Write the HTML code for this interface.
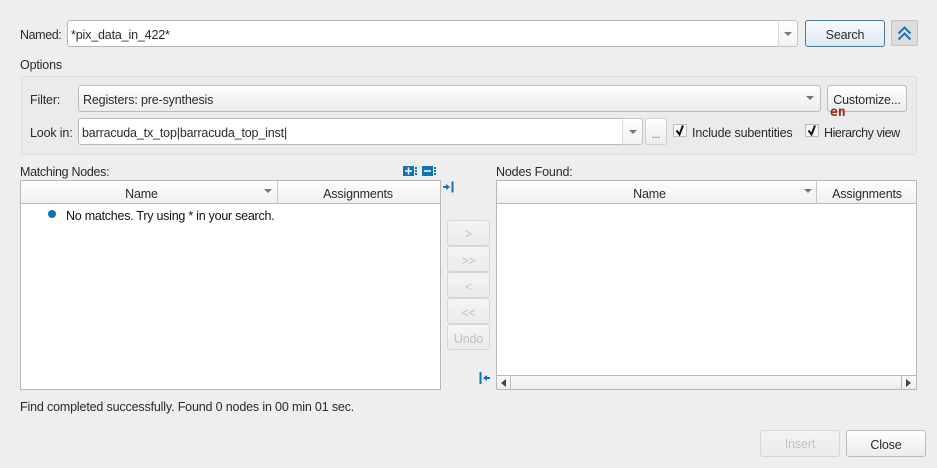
<!DOCTYPE html>
<html><head><meta charset="utf-8"><style>
html,body{margin:0;padding:0;width:937px;height:468px;overflow:hidden;background:#eeeeee}
body{position:relative;font-family:"Liberation Sans",sans-serif;font-size:12.5px;letter-spacing:-.16px;color:#2a2a2a}
.a{position:absolute;box-sizing:border-box}
.t{position:absolute;white-space:nowrap;line-height:16px}
.f{background:#fff;border:1px solid #b8b8b8;border-radius:3px}
.g{background:linear-gradient(#fefefe,#ececec);border:1px solid #bcbcbc;border-radius:3px}
.sep{background:linear-gradient(#fff,#f2f2f2);border:1px solid #c4c4c4;border-left-color:#dcdcdc;border-radius:0 3px 3px 0}
.d{background:linear-gradient(#f4f4f4,#ebebeb);border:1px solid #d6d6d6;border-radius:3px;color:#c2c2c2;text-align:center;line-height:26px}
.l{line-height:28px}
.ar{position:absolute;width:0;height:0;border-left:4px solid transparent;border-right:4px solid transparent;border-top:4px solid #777}
.cb{position:absolute;width:14px;height:13px;box-sizing:border-box;background:#f6f6f6;border:1px solid #bcbcbc;border-radius:1px}
.h{background:linear-gradient(#fefefe,#f0f0f0);border-bottom:1px solid #b8b8b8}
.c{text-align:center}
</style></head><body>

<div class="t" style="left:20px;top:27px;letter-spacing:-.4px">Named:</div>
<div class="a f" style="left:67px;top:20px;width:731px;height:27px"></div>
<div class="a sep" style="left:778px;top:20px;width:20px;height:27px"></div>
<div class="ar" style="left:784px;top:32px"></div>
<div class="t" style="left:71px;top:27px">*pix_data_in_422*</div>

<div class="a" style="left:805px;top:20px;width:80px;height:27px;border:1px solid #4a7893;border-radius:3px;background:linear-gradient(#f8fbfd,#dde9f1)"></div>
<div class="t c" style="left:805px;top:27px;width:80px">Search</div>

<div class="a" style="left:891px;top:20px;width:27px;height:26px;border:1px solid #c4c4c4;border-radius:2px;background:#dcdcdc"></div>
<svg class="a" style="left:891px;top:20px" width="27" height="26" fill="none" stroke="#1b73b4" stroke-width="2"><path d="M7.500 13.500L13.500 7.500L19.500 13.500M7.500 19.500L13.500 13.500L19.500 19.500"/></svg>

<div class="t" style="left:20px;top:57px">Options</div>
<div class="a" style="left:21px;top:76px;width:896px;height:79px;border:1px solid #dcdcdc;border-radius:3px;background:#ebebeb"></div>

<div class="t" style="left:30px;top:92px">Filter:</div>
<div class="a g" style="left:78px;top:85px;width:743px;height:27px;background:linear-gradient(#fdfdfd,#ececec)"></div>
<div class="ar" style="left:806px;top:96px"></div>
<div class="t" style="left:83px;top:92px">Registers: pre-synthesis</div>
<div class="a g" style="left:827px;top:85px;width:80px;height:27px"></div>
<div class="t c" style="left:827px;top:92px;width:80px">Customize...</div>
<div class="t" style="left:830px;top:105px;letter-spacing:0;font-family:'DejaVu Sans Mono','Liberation Mono',monospace;font-weight:bold;font-size:13px;color:#9c2a22">en</div>

<div class="t" style="left:30px;top:125px">Look in:</div>
<div class="a f" style="left:78px;top:118px;width:565px;height:27px"></div>
<div class="a sep" style="left:622px;top:118px;width:21px;height:27px"></div>
<div class="ar" style="left:629px;top:130px"></div>
<div class="t" style="left:82px;top:125px">barracuda_tx_top|barracuda_top_inst|</div>
<div class="a g" style="left:645px;top:118px;width:22px;height:27px;border-color:#cfcfcf"></div>
<div class="t c" style="left:645px;top:127px;width:22px;font-size:11px;color:#555">...</div>

<div class="cb" style="left:673px;top:124px"></div>
<svg class="a" style="left:673px;top:124px" width="14" height="13" fill="none" stroke="#111" stroke-width="2"><path d="M3.500 6.500L6.500 10.500L10 1.500"/></svg>
<div class="t" style="left:692px;top:125px">Include subentities</div>
<div class="cb" style="left:805px;top:124px"></div>
<svg class="a" style="left:805px;top:124px" width="14" height="13" fill="none" stroke="#111" stroke-width="2"><path d="M3.500 6.500L6.500 10.500L10 1.500"/></svg>
<div class="t" style="left:824px;top:125px;letter-spacing:-.45px">Hierarchy view</div>

<div class="t" style="left:20px;top:164px;letter-spacing:-.3px">Matching Nodes:</div>
<svg class="a" style="left:403px;top:165px" width="36" height="13">
<rect x="0" y="1" width="11" height="10" fill="#1272b6"/><path d="M2 6H9M5.500 2.500V9.500" stroke="#fff" stroke-width="1.500"/><rect x="12" y="2" width="2" height="2" fill="#1272b6"/><rect x="12" y="5" width="2" height="2" fill="#1272b6"/><rect x="12" y="8" width="2" height="2" fill="#1272b6"/>
<rect x="19" y="1" width="11" height="10" fill="#1272b6"/><path d="M21 6H28" stroke="#fff" stroke-width="1.500"/><rect x="31" y="2" width="2" height="2" fill="#1272b6"/><rect x="31" y="5" width="2" height="2" fill="#1272b6"/><rect x="31" y="8" width="2" height="2" fill="#1272b6"/>
</svg>
<div class="a" style="left:20px;top:180px;width:421px;height:210px;background:#fff;border:1px solid #b8b8b8"></div>
<div class="a h" style="left:21px;top:181px;width:419px;height:23px"></div>
<div class="a" style="left:277px;top:181px;width:1px;height:23px;background:#c8c8c8"></div>
<div class="t c" style="left:21px;top:186px;width:241px">Name</div>
<div class="ar" style="left:264px;top:189px"></div>
<div class="t c" style="left:277px;top:186px;width:162px">Assignments</div>
<div class="a" style="left:48px;top:210px;width:8px;height:8px;border-radius:50%;background:#1272b6"></div>
<div class="t" style="left:66px;top:208px;color:#111;letter-spacing:-.25px">No matches. Try using * in your search.</div>

<svg class="a" style="left:442px;top:180px" width="14" height="14"><path d="M1 7H5" stroke="#1272b6" stroke-width="2"/><path d="M4 4L8 7L4 10Z" fill="#1272b6"/><rect x="9.500" y="1.500" width="2" height="11" fill="#1272b6"/></svg>

<div class="a d" style="left:447px;top:220px;width:43px;height:26px">&gt;</div>
<div class="a d l" style="left:447px;top:246px;width:43px;height:26px">&gt;&gt;</div>
<div class="a d l" style="left:447px;top:272px;width:43px;height:26px">&lt;</div>
<div class="a d l" style="left:447px;top:298px;width:43px;height:26px">&lt;&lt;</div>
<div class="a d l" style="left:447px;top:324px;width:43px;height:26px">Undo</div>

<svg class="a" style="left:477px;top:371px" width="14" height="14"><rect x="2.500" y="1" width="2" height="12" fill="#1272b6"/><path d="M9 7H13" stroke="#1272b6" stroke-width="2"/><path d="M10 4L6 7L10 10Z" fill="#1272b6"/></svg>

<div class="t" style="left:496px;top:164px">Nodes Found:</div>
<div class="a" style="left:496px;top:180px;width:421px;height:210px;background:#fff;border:1px solid #b8b8b8"></div>
<div class="a h" style="left:497px;top:181px;width:419px;height:23px"></div>
<div class="a" style="left:816px;top:181px;width:1px;height:23px;background:#c8c8c8"></div>
<div class="t c" style="left:497px;top:186px;width:305px">Name</div>
<div class="ar" style="left:804px;top:189px"></div>
<div class="t c" style="left:817px;top:186px;width:100px">Assignments</div>
<div class="a" style="left:497px;top:375px;width:419px;height:14px;background:linear-gradient(#fafafa,#ececec);border-top:1px solid #b8b8b8"></div>
<div class="a" style="left:510px;top:375px;width:1px;height:14px;background:#c4c4c4"></div>
<div class="a" style="left:901px;top:375px;width:1px;height:14px;background:#b8b8b8"></div>
<div class="a" style="left:501px;top:379px;width:0;height:0;border-top:4px solid transparent;border-bottom:4px solid transparent;border-right:5px solid #444"></div>
<div class="a" style="left:906px;top:379px;width:0;height:0;border-top:4px solid transparent;border-bottom:4px solid transparent;border-left:5px solid #444"></div>

<div class="t" style="left:20px;top:399px">Find completed successfully. Found 0 nodes in 00 min 01 sec.</div>

<div class="a d" style="left:760px;top:430px;width:80px;height:27px;line-height:27px">Insert</div>
<div class="a g" style="left:846px;top:430px;width:80px;height:27px"></div>
<div class="t c" style="left:846px;top:437px;width:80px">Close</div>
</body></html>
